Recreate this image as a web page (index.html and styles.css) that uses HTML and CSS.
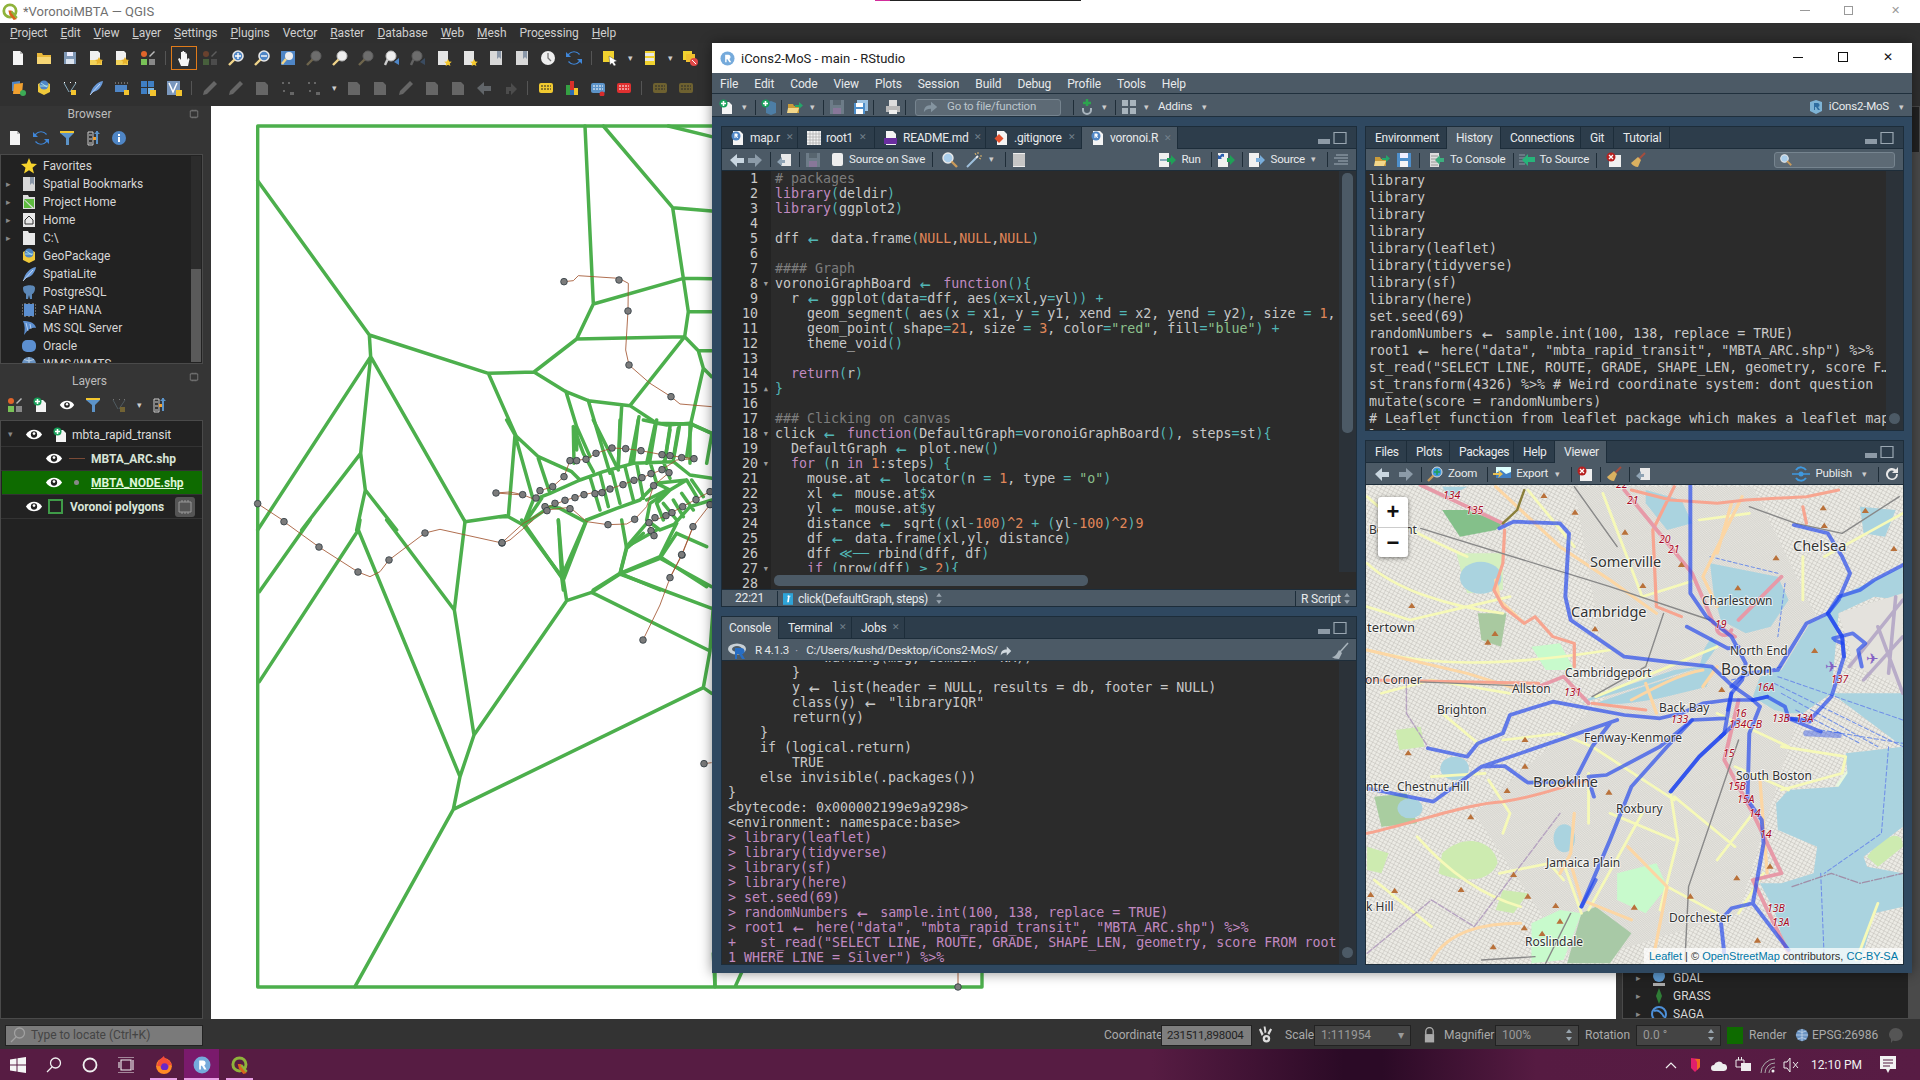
FILE: index.html
```html
<!DOCTYPE html>
<html lang="en">
<head>
<meta charset="utf-8">
<title>VoronoiMBTA — QGIS and RStudio</title>
<link rel="stylesheet" href="styles.css">
</head>
<body>
<svg class="defs" width="0" height="0">
<defs>
<symbol id="doc" viewBox="0 0 16 16"><path d="M3 1h7l3 3v11H3z" fill="#f4f4f4"/><path d="M10 1v3h3z" fill="#bbb"/></symbol>
<symbol id="docplus" viewBox="0 0 16 16"><path d="M3 3h7l3 3v9H3z" fill="#f4f4f4"/><circle cx="4.5" cy="4.5" r="4" fill="#18a05a"/><path d="M4.5 2v5M2 4.5h5" stroke="#fff" stroke-width="1.6"/></symbol>
<symbol id="folder" viewBox="0 0 16 16"><path d="M1 3h5l1 2h8v9H1z" fill="#e9b83a"/><path d="M1 7h14v7H1z" fill="#f6d675"/></symbol>
<symbol id="folderarrow" viewBox="0 0 16 16"><path d="M1 5h5l1 2h5v7H1z" fill="#c99b3a"/><path d="M1 9h11l-2 5H0z" fill="#f3d78a"/><path d="M8 6h4V3l4 3.5-4 3.5V8H8z" fill="#25a56a"/></symbol>
<symbol id="disk" viewBox="0 0 16 16"><path d="M2 2h12v12H2z" fill="#7e97b5"/><path d="M5 2h6v4H5z" fill="#eef"/><path d="M4 9h8v5H4z" fill="#dbe4ef"/></symbol>
<symbol id="diskw" viewBox="0 0 16 16"><path d="M1 1h14v14H1z" fill="#4e8fcb"/><path d="M4 1h8v5H4z" fill="#eef"/><path d="M4 9h8v6H4z" fill="#f5f5f5"/></symbol>
<symbol id="star" viewBox="0 0 16 16"><path d="M8 0l2.2 5.6 5.8.4-4.5 3.7 1.5 5.8L8 12.3 3 15.5l1.5-5.8L0 6l5.8-.4z" fill="#f6d32d"/></symbol>
<symbol id="bm" viewBox="0 0 16 16"><path d="M2 1h12v14H2z" fill="#d8d8d8"/><path d="M9 1h4v8l-2-2-2 2z" fill="#8a97a8"/></symbol>
<symbol id="bmstar" viewBox="0 0 16 16"><path d="M2 1h10v14H2z" fill="#e4e4e4"/><path d="M12 9l1.2 2.4 2.6.3-2 1.8.6 2.5-2.4-1.3-2.4 1.3.6-2.5-2-1.8 2.6-.3z" fill="#f6c92d"/></symbol>
<symbol id="home" viewBox="0 0 16 16"><path d="M2 1h12v14H2z" fill="#e8e8e8"/><path d="M8 4l4 4v4H4V8z" fill="none" stroke="#333"/></symbol>
<symbol id="phome" viewBox="0 0 16 16"><path d="M2 1h5l1 2h6v12H2z" fill="#dcdcdc"/><path d="M3 5l10 9V5zM3 6v8h8" fill="#5dbb3f"/></symbol>
<symbol id="fold" viewBox="0 0 16 16"><path d="M2 1h5l1 2h6v12H2z" fill="#e8e8e8"/></symbol>
<symbol id="gpkg" viewBox="0 0 16 16"><path d="M8 1l6 3v8l-6 3-6-3V4z" fill="#f0c93a"/><circle cx="8" cy="5" r="4.5" fill="#4f86c6"/><path d="M5 3l6 4M4 6h8" stroke="#cfe" stroke-width=".7"/></symbol>
<symbol id="feather" viewBox="0 0 16 16"><path d="M2 15C4 7 9 2 15 1c-1 6-5 10-10 11z" fill="#6a9ad8"/><path d="M2 15L12 4" stroke="#d8e8ff" stroke-width=".8"/></symbol>
<symbol id="pg" viewBox="0 0 16 16"><path d="M2 4c0-3 12-4 12 0 0 4-2 6-3 6v5H9l-1-4-1 4H5v-5C3 9 2 7 2 4z" fill="#5c88b8"/></symbol>
<symbol id="hana" viewBox="0 0 16 16"><path d="M3 2h10v12H3z" fill="#5c8fd0"/><path d="M1 3h1M1 6h1M1 9h1M1 12h1M14 3h1M14 6h1M14 9h1M14 12h1M4 1v1M8 1v1M12 1v1M4 14v1M8 14v1M12 14v1" stroke="#aaa"/></symbol>
<symbol id="mssql" viewBox="0 0 16 16"><path d="M2 1c5 0 12 1 13 7-6-1-8 2-12 7 1-5 1-10-1-14z" fill="#5c8fd0"/><path d="M5 3l2 8M9 4l1 5" stroke="#d8e8ff" stroke-width=".7"/></symbol>
<symbol id="ora" viewBox="0 0 16 16"><rect x="1" y="2" width="14" height="12" rx="5" fill="#5c8fd0"/></symbol>
<symbol id="globe" viewBox="0 0 16 16"><circle cx="8" cy="8" r="7" fill="#6a93c2"/><path d="M1 8h14M8 1v14M3 3.500q5 3 10 0M3 12.500q5-3 10 0" stroke="#cde" fill="none" stroke-width=".8"/></symbol>
<symbol id="refresh" viewBox="0 0 16 16"><path d="M13 5A6 6 0 0 0 3 5l2 2H0V2l2 2a8 8 0 0 1 12 0z" fill="#3f86d8"/><path d="M3 11a6 6 0 0 0 10 0l-2-2h5v5l-2-2a8 8 0 0 1-12 0z" fill="#3f86d8"/></symbol>
<symbol id="filter" viewBox="0 0 16 16"><path d="M1 1h14v2L10 8v7H7V8L1 3z" fill="#5c93c8"/><path d="M1 1h14v2H1z" fill="#f3c72f"/></symbol>
<symbol id="tree" viewBox="0 0 16 16"><path d="M3 2h5v13H3zM4 5h3M4 9h3M4 13h3" fill="none" stroke="#ccc"/><path d="M12 1v13" stroke="#5c93c8" stroke-width="2"/><path d="M9 4l3-3 3 3" fill="#5c93c8"/><path d="M8 7h3v3H8z" fill="#f0a030"/></symbol>
<symbol id="info" viewBox="0 0 16 16"><circle cx="8" cy="8" r="7" fill="#4f86c6"/><path d="M7 7h2v5H7zM7 4h2v2H7z" fill="#fff"/></symbol>
<symbol id="eye" viewBox="0 0 20 14"><path d="M1 7c4-7 14-7 18 0-4 7-14 7-18 0z" fill="#fff"/><circle cx="10" cy="7" r="3.500" fill="#222"/><circle cx="10" cy="6" r="1.500" fill="#fff"/></symbol>
<symbol id="hand" viewBox="0 0 16 16"><path d="M5 16L2 9l1.500-1L5 10V2h1.500v6V1H8v7V2h1.500v6V3.500H11V10l1-2 1.500 1-1.500 7z" fill="#f5f5f5"/></symbol>
<symbol id="lensp" viewBox="0 0 16 16"><circle cx="10" cy="6" r="5" fill="#4f86c6" stroke="#e8e8e8" stroke-width="1.600"/><path d="M10 3v6M7 6h6" stroke="#fff" stroke-width="1.400"/><path d="M6.500 9.500L1 15" stroke="#f1d58a" stroke-width="2.400"/></symbol>
<symbol id="lensm" viewBox="0 0 16 16"><circle cx="10" cy="6" r="5" fill="#4f86c6" stroke="#e8e8e8" stroke-width="1.600"/><path d="M7 6h6" stroke="#fff" stroke-width="1.400"/><path d="M6.500 9.500L1 15" stroke="#f1d58a" stroke-width="2.400"/></symbol>
<symbol id="lensf" viewBox="0 0 16 16"><path d="M1 1h14v14H1z" fill="#4f86c6"/><circle cx="9" cy="6" r="4" fill="#eee"/><path d="M6 9L2 14" stroke="#f1d58a" stroke-width="2.400"/></symbol>
<symbol id="lens" viewBox="0 0 16 16"><circle cx="10" cy="6" r="5" fill="#eee" stroke="#bbb"/><path d="M6.500 9.500L1 15" stroke="#f1d58a" stroke-width="2.400"/></symbol>
<symbol id="lensb" viewBox="0 0 16 16"><circle cx="7" cy="6" r="5" fill="#eee" stroke="#bbb"/><path d="M3.500 9.500L1 15" stroke="#ccc" stroke-width="2.400"/><path d="M15 8l-5 4 5 3z" fill="#4f86c6"/></symbol>
<symbol id="clock" viewBox="0 0 16 16"><circle cx="8" cy="8" r="7" fill="#eee"/><path d="M8 3v5l3 3" stroke="#777" fill="none" stroke-width="1.300"/></symbol>
<symbol id="sel" viewBox="0 0 16 16"><path d="M1 1h11v11H1z" fill="#f1d22f"/><path d="M7 6l8 5-3 1 2 3-2 1-2-3-2 2z" fill="#fff" stroke="#333" stroke-width=".4"/></symbol>
<symbol id="form" viewBox="0 0 16 16"><path d="M3 1h10v14H3z" fill="#f1d22f"/><path d="M3 3h9v3H3zM3 8h9v3H3z" fill="#e8e8e8"/></symbol>
<symbol id="desel" viewBox="0 0 16 16"><path d="M1 1h9v9H1z" fill="#f1d22f"/><path d="M4 4h9v8H4z" fill="#f1c02f"/><circle cx="12" cy="12" r="4" fill="#e04848"/><path d="M10 10l4 4" stroke="#fff"/></symbol>
<symbol id="shape" viewBox="0 0 16 16"><circle cx="4" cy="4" r="3" fill="#e0652a"/><path d="M9 6l5-5 1 1-5 5z" fill="#bbb"/><path d="M1 9h6v6H1z" fill="#79c257"/><path d="M9 9h6v6H9z" fill="#888"/></symbol>
<symbol id="docstar" viewBox="0 0 16 16"><path d="M2 1h8l2 2v7H2z" fill="#f0f0f0"/><path d="M2 10h12v5H2z" fill="#f2d35a"/><path d="M11 7l1.300 2.600 2.700.3-2 1.900.5 2.700L11 13.200 8.500 14.500l.5-2.700-2-1.900 2.700-.3z" fill="#e8b32c"/></symbol>
<symbol id="layeradd" viewBox="0 0 16 16"><path d="M2 2l8-1v10H2z" fill="#4f86c6"/><path d="M4 4l9-1-1 11H3z" fill="#f0a030"/><circle cx="13" cy="13" r="3" fill="#3cab56"/></symbol>
<symbol id="pts" viewBox="0 0 16 16"><path d="M2 2h1v1H2zM8 2h1v1H8zM13 2h1v1h-1z" fill="#fff"/><path d="M2 3l5 9M14 3l-6 9" stroke="#8ab" /><path d="M9 10h5v5H9z" fill="#f3c42f"/></symbol>
<symbol id="rect" viewBox="0 0 16 16"><path d="M1 3h14M1 14" stroke="#aaa" stroke-dasharray="1 2"/><path d="M1 5h12v7H1z" fill="#4f86c6"/><path d="M10 10h5v5h-5z" fill="#f3c42f"/></symbol>
<symbol id="grid" viewBox="0 0 16 16"><path d="M1 1h6v6H1zM8 1h6v6H8zM1 8h6v6H1z" fill="#3f7fc4"/><path d="M8 8h6v6H8z" fill="#7cb6e0"/><path d="M10 10h6v6h-6z" fill="#f3c42f"/></symbol>
<symbol id="vv" viewBox="0 0 16 16"><path d="M1 1h13v14H1z" fill="#7a97bd"/><path d="M3 3l4 9 4-9" stroke="#fff" fill="none" stroke-width="1.500"/><path d="M10 10h6v6h-6z" fill="#f3c42f"/></symbol>
<symbol id="pen" viewBox="0 0 16 16"><path d="M12 1l3 3L5 14l-4 1 1-4z" fill="#666"/></symbol>
<symbol id="gear" viewBox="0 0 16 16"><path d="M2 2h9l3 3v10H2z" fill="#666"/></symbol>
<symbol id="ptsd" viewBox="0 0 16 16"><path d="M2 2h2v2H2zM8 2h2v2H8zM3 10h2v2H3zM10 12h4v3h-4z" fill="#666"/></symbol>
<symbol id="abc" viewBox="0 0 16 16"><rect x="1" y="3" width="14" height="10" rx="2" fill="#f0c930"/><path d="M3 6h10M3 9h10" stroke="#222" stroke-dasharray="2 1"/></symbol>
<symbol id="abcb" viewBox="0 0 16 16"><rect x="1" y="3" width="14" height="10" rx="2" fill="#5c93c8"/><path d="M3 6h10M3 9h10" stroke="#fff" stroke-dasharray="2 1"/><circle cx="12" cy="14" r="2.500" fill="#d62c2c"/></symbol>
<symbol id="abcr" viewBox="0 0 16 16"><rect x="1" y="3" width="14" height="10" rx="2" fill="#df3030"/><path d="M3 6h10M3 9h10" stroke="#fff" stroke-dasharray="2 1"/></symbol>
<symbol id="bars" viewBox="0 0 16 16"><path d="M6 1h4v9H6z" fill="#d8302a"/><path d="M2 5h4v10H2z" fill="#35a043"/><path d="M10 8h4v7h-4z" fill="#f0c72f"/><path d="M6 10h4v5H6z" fill="#2f6db5"/></symbol>
<symbol id="redo" viewBox="0 0 16 16"><path d="M4 14V7h5V3l6 6-6 6v-4H7v3z" fill="#888"/></symbol>
<symbol id="rcube" viewBox="0 0 16 16"><path d="M8 1l6 2v9l-6 3-6-3V3z" fill="#7eb3d5"/><path d="M6 4h3a2 2 0 0 1 1 4l2 3h-2L8 8H7v3H6z" fill="#2f6da0"/></symbol>
<symbol id="rnew" viewBox="0 0 16 16"><path d="M5 4l5-2 5 2v10l-5 2-5-2z" fill="#4d7ea6"/><circle cx="4.500" cy="4.500" r="4" fill="#18a05a"/><path d="M4.500 2v5M2 4.500h5" stroke="#fff" stroke-width="1.600"/></symbol>
<symbol id="rcirc" viewBox="0 0 16 16"><circle cx="8" cy="8" r="7.500" fill="#75aadb"/><path d="M5.500 4h3.500a2.400 2.400 0 0 1 1 4.500l2 3.500h-2L8 8.700H7V12H5.500z" fill="#fff"/></symbol>
<symbol id="rfile" viewBox="0 0 16 16"><path d="M3 1h7l3 3v11H3z" fill="#f4f4f4"/><circle cx="6" cy="6" r="4.500" fill="#4f86c6"/><path d="M4.500 3.500h2a1.400 1.400 0 0 1 .6 2.600l1 2H7L5.800 6.300h-.3V8h-1z" fill="#fff"/></symbol>
<symbol id="table" viewBox="0 0 16 16"><path d="M1 1h14v14H1z" fill="#f2f2f2"/><path d="M1 4h14M1 7h14M1 10h14M1 13h14M4 1v14M7 1v14M10 1v14M13 1v14" stroke="#aaa" stroke-width=".7"/></symbol>
<symbol id="md" viewBox="0 0 16 16"><path d="M3 1h7l3 3v11H3z" fill="#f4f4f4"/><path d="M1 8h13v6H1z" fill="#6a2ea0"/></symbol>
<symbol id="git" viewBox="0 0 16 16"><path d="M3 1h7l3 3v11H3z" fill="#f4f4f4"/><path d="M5 4l4.500 4.500-4.500 4.500L.5 8.500z" fill="#e2512e"/></symbol>
<symbol id="print" viewBox="0 0 16 16"><path d="M4 1h8v6H4z" fill="#ddd"/><path d="M1 7h14v6H1z" fill="#b9b9b9"/><path d="M4 11h8v4H4z" fill="#eee"/></symbol>
<symbol id="diskgray" viewBox="0 0 16 16"><path d="M1 1h14v14H1z" fill="#6d7c88"/><path d="M4 1h8v5H4z" fill="#57656f"/><path d="M4 9h8v6H4z" fill="#879"/></symbol>
<symbol id="disks" viewBox="0 0 16 16"><path d="M4 1h11v11H4z" fill="#9cc2e2"/><path d="M1 4h11v11H1z" fill="#4e8fcb"/><path d="M3 4h7v4H3z" fill="#fff"/><path d="M3 10h7v5H3z" fill="#fff"/></symbol>
<symbol id="back" viewBox="0 0 16 16"><path d="M1 8l7-6v4h7v5H8v4z" fill="#c9d6e0"/></symbol>
<symbol id="fwd" viewBox="0 0 16 16"><path d="M15 8L8 2v4H1v5h7v4z" fill="#8c9ba8"/></symbol>
<symbol id="popout" viewBox="0 0 16 16"><path d="M5 2h10v12H5z" fill="#e8e8e8"/><path d="M1 10l5-5v3h3v3H6v3z" fill="#8fa3b4"/></symbol>
<symbol id="lenss" viewBox="0 0 16 16"><circle cx="6" cy="6" r="5" fill="#a9cdea" stroke="#e8e8e8" stroke-width="1.400"/><path d="M9.500 9.500L15 15" stroke="#c99a5a" stroke-width="2.400"/></symbol>
<symbol id="wand" viewBox="0 0 16 16"><path d="M1 15L10 6" stroke="#9fc0dd" stroke-width="2"/><path d="M10 6l2-2" stroke="#eee" stroke-width="2"/><path d="M12 0v2M16 4h-2M9 1l1 2M15 7l-2-1" stroke="#e0b66a"/></symbol>
<symbol id="notes" viewBox="0 0 16 16"><path d="M2 1h12v14H2z" fill="#eee"/><path d="M2 3h12M2 5h12M2 7h12M2 9h12M2 11h12M2 13h12" stroke="#888" stroke-width=".8"/></symbol>
<symbol id="run" viewBox="0 0 18 16"><path d="M1 1h10v14H1z" fill="#f0f0f0"/><path d="M2 7h7v2H2z" fill="#8ab"/><path d="M9 6h4V3l5 5-5 5v-3H9z" fill="#1fa057"/></symbol>
<symbol id="rerun" viewBox="0 0 18 16"><path d="M1 1h10v14H1z" fill="#f0f0f0"/><path d="M7 2a3 3 0 0 0-4 2L1 3v4h4L4 6a2 2 0 0 1 3-1z" fill="#2b5fb0"/><path d="M10 6h3V3l5 5-5 5v-3h-3z" fill="#1fa057"/></symbol>
<symbol id="source" viewBox="0 0 18 16"><path d="M1 1h10v14H1z" fill="#f0f0f0"/><path d="M8 6h4V3l5 5-5 5v-3H8z" fill="#79aedc"/></symbol>
<symbol id="lines" viewBox="0 0 16 16"><path d="M3 3h12M1 6h14M5 9h10M1 12h14" stroke="#a0adb8"/></symbol>
<symbol id="tocon" viewBox="0 0 16 16"><path d="M1 1h9v14H1z" fill="#ddd"/><path d="M2 4h7M2 7h7M2 10h7M2 13h7" stroke="#888" stroke-width=".8"/><path d="M6 8l5-5v3h4v4h-4v3z" fill="#3cae7e"/></symbol>
<symbol id="tosrc" viewBox="0 0 16 16"><path d="M0 3h6M0 6h6M0 9h6M0 12h6" stroke="#8a98a4"/><path d="M3 8l6-6v3h7v5H9v4z" fill="#27b47a"/></symbol>
<symbol id="xdoc" viewBox="0 0 16 16"><path d="M3 3h12v12H3z" fill="#f0f0f0"/><circle cx="5" cy="5" r="4.500" fill="#b72020"/><path d="M3 3l4 4M7 3l-4 4" stroke="#fff" stroke-width="1.300"/></symbol>
<symbol id="broom" viewBox="0 0 16 16"><path d="M15 1L9 7" stroke="#a54d3e" stroke-width="2"/><path d="M8 5l3 3-3 7c-3 0-6-2-7-4z" fill="#d9b060"/></symbol>
<symbol id="fx" viewBox="0 0 12 14"><path d="M0 0h12v14H0z" fill="#2ea4d8"/><path d="M7 3h2v1H8L7 11H5l1-7H5V3h1l1-1z" fill="#fff"/></symbol>
<symbol id="upd" viewBox="0 0 6 12"><path d="M3 0l3 4H0zM3 12L0 8h6z" fill="#98a4ae"/></symbol>
<symbol id="share" viewBox="0 0 16 16"><path d="M1 14c0-6 3-8 8-8V2l6 6-6 6v-4c-4 0-6 1-8 4z" fill="#d0d8de"/></symbol>
<symbol id="pan" viewBox="0 0 18 16"><path d="M1 14c0-6 3-8 8-8V2l7 6-7 6v-4c-4 0-6 1-8 4z" fill="#8494a0"/></symbol>
<symbol id="vcs" viewBox="0 0 16 16"><path d="M8 0v7M4 4h8" stroke="#2da44e" stroke-width="2.500"/><path d="M4 9v2a4 4 0 0 0 8 0V9" fill="none" stroke="#a8b4bd" stroke-width="2"/></symbol>
<symbol id="panes" viewBox="0 0 16 16"><path d="M1 1h6v6H1zM9 1h6v6H9zM1 9h6v6H1zM9 9h6v6H9z" fill="#a8b4bd"/></symbol>
<symbol id="pub" viewBox="0 0 18 14"><path d="M4 3c3-4 8-3 10 0M14 11c-3 4-8 3-10 0" fill="none" stroke="#3f99df" stroke-width="2"/><path d="M0 7h18" stroke="#3f99df" stroke-width="1.500"/><circle cx="9" cy="7" r="2.500" fill="#3f99df"/></symbol>
<symbol id="reload" viewBox="0 0 16 16"><path d="M14 8a6 6 0 1 1-2-4.500L14 1v6H8l2-2a4 4 0 1 0 2 3z" fill="#e8e8e8"/></symbol>
<symbol id="zoomp" viewBox="0 0 16 16"><circle cx="10" cy="6" r="5" fill="#3f99df" stroke="#ddd"/><path d="M10 3v6M7 6h6" stroke="#1fa057" stroke-width="1.500"/><path d="M6.500 9.500L1 15" stroke="#c99a5a" stroke-width="2.400"/></symbol>
<symbol id="pic" viewBox="0 0 18 16"><path d="M3 1h15v11H3z" fill="#dff"/><path d="M3 7l5-3 5 4 5-2v6H3z" fill="#3f7fc4"/><path d="M0 7h6l-1-3 5 4-5 4 1-3H0z" fill="#e8c050"/></symbol>
<symbol id="mini" viewBox="0 0 30 14"><path d="M1 8h12v5H1z" fill="#8d9aa6"/><path d="M17 1.500h12v11H17z" fill="none" stroke="#9aa7b2" stroke-width="1.200"/></symbol>
<symbol id="brush" viewBox="0 0 18 18"><path d="M17 1L9 10" stroke="#a9b4bc" stroke-width="1.500"/><path d="M8 8l3 3-3 6c-3 0-6-1-7-2 3 0 5-3 7-7z" fill="#a9b4bc"/></symbol>
<symbol id="rlogo" viewBox="0 0 20 16"><ellipse cx="9" cy="6" rx="9" ry="5.500" fill="#c8d0d6"/><ellipse cx="9" cy="6" rx="5" ry="3" fill="#4e5c68"/><path d="M7 5h6a3 3 0 0 1 1 6l3 5h-3l-3-5H9v5H7z" fill="#276dc3"/></symbol>
<symbol id="qlogo" viewBox="0 0 16 16"><circle cx="7.500" cy="7.500" r="5.800" fill="none" stroke="#8fb33b" stroke-width="2.600"/><path d="M6 7l3 0 1 3 4 5-3 1-4-5z" fill="#d8641d"/><path d="M9 8l5 6" stroke="#8fb33b" stroke-width="2"/></symbol>
<symbol id="lock" viewBox="0 0 14 16"><path d="M3 7V4a4 4 0 0 1 8 0v3" fill="none" stroke="#aaa" stroke-width="1.500"/><path d="M2 7h10v9H2z" fill="#aaa"/></symbol>
<symbol id="wkt" viewBox="0 0 16 18"><path d="M4 10L1 3l2-1 3 6M7 7L6 0h2l1 6M10 7l3-5 2 1-3 6" fill="#ddd"/><circle cx="9" cy="13" r="4" fill="#ddd"/><circle cx="9" cy="13" r="1.500" fill="#333"/></symbol>
<symbol id="chip" viewBox="0 0 16 16"><path d="M2 3h12v10H2z" fill="none" stroke="#999"/><path d="M5 1v2M8 1v2M11 1v2M5 13v2M8 13v2M11 13v2" stroke="#999"/></symbol>
<symbol id="gdal" viewBox="0 0 16 16"><circle cx="8" cy="6" r="6" fill="#5c99cf"/><path d="M2 13h12v3H2z" fill="#aaa"/></symbol>
<symbol id="grass" viewBox="0 0 16 16"><path d="M8 0l3 8-3 8-3-8z" fill="#2f7c36"/></symbol>
<symbol id="saga" viewBox="0 0 16 16"><circle cx="8" cy="8" r="7" fill="none" stroke="#4d8fd8" stroke-width="2"/><path d="M3 5c4-2 8 2 10 6" fill="none" stroke="#4d8fd8" stroke-width="2"/></symbol>
<symbol id="bubble" viewBox="0 0 16 16"><path d="M8 1a7 6.500 0 1 1-3 12.500L3 16v-4A7 6.500 0 0 1 8 1z" fill="#555"/></symbol>
<symbol id="win" viewBox="0 0 16 16"><path d="M0 2.500l6.500-1v6H0zM7.500 1.300L16 0v7.500H7.500zM0 8.500h6.500v6L0 13.500zM7.500 8.500H16V16l-8.500-1.200z" fill="#f5f5f5"/></symbol>
<symbol id="srch" viewBox="0 0 16 16"><circle cx="9.500" cy="6" r="5" fill="none" stroke="#f0f0f0" stroke-width="1.300"/><path d="M6 10l-5 5" stroke="#f0f0f0" stroke-width="1.300"/></symbol>
<symbol id="ring" viewBox="0 0 16 16"><circle cx="8" cy="8" r="6.500" fill="none" stroke="#f0f0f0" stroke-width="1.800"/></symbol>
<symbol id="taskv" viewBox="0 0 16 16"><path d="M3 3h10v10H3zM0 0h16M0 16h16M15 3v10M1 5v6" fill="none" stroke="#f0f0f0" stroke-width="1.100"/></symbol>
<symbol id="ff" viewBox="0 0 16 16"><circle cx="8" cy="9" r="7" fill="#ff8a24"/><circle cx="8.500" cy="9" r="3.500" fill="#7a2bd0"/><path d="M2 9C2 4 6 2 8 0c0 3 6 3 7 8z" fill="#f44c3a"/><circle cx="8.500" cy="9.500" r="3" fill="#6a28c8"/></symbol>
<symbol id="chev" viewBox="0 0 16 16"><path d="M3 11l5-5 5 5" fill="none" stroke="#f0f0f0" stroke-width="1.200"/></symbol>
<symbol id="proton" viewBox="0 0 16 16"><path d="M4 1l9 1v8l-5 5-4-4z" fill="#e0206c"/><path d="M8 2l5 0v8l-3 3V5z" fill="#f06a20"/></symbol>
<symbol id="cloud" viewBox="0 0 16 12"><path d="M3 12a3 3 0 0 1 0-6 5 5 0 0 1 9-1 3.500 3.500 0 0 1 1 7z" fill="#eee"/></symbol>
<symbol id="plug" viewBox="0 0 16 16"><path d="M1 3h8v7H1z" fill="none" stroke="#eee"/><path d="M3 0h1v3H3zM6 0h1v3H6z" fill="#eee"/><path d="M6 6h10v8H6z" fill="#eee"/></symbol>
<symbol id="wifi" viewBox="0 0 16 16"><path d="M2 16a14 14 0 0 1 14-14M6 16a10 10 0 0 1 10-10M10 16a6 6 0 0 1 6-6" fill="none" stroke="#aaa"/><circle cx="14" cy="14" r="1.500" fill="#eee"/></symbol>
<symbol id="spk" viewBox="0 0 16 16"><path d="M1 5h3l3-4v14l-3-4H1z" fill="none" stroke="#eee"/><path d="M10 5l5 6M15 5l-5 6" stroke="#eee"/></symbol>
<symbol id="notif" viewBox="0 0 16 18"><path d="M0 0h16v13h-6l-2 4-2-4H0z" fill="#f2f2f2"/><path d="M3 4h10M3 7h10M3 10h7" stroke="#541a40"/></symbol>
</defs>
</svg>

<div class="screen">
  <div class="capline"><i class="capline-p"></i></div>

  <section class="qgis">
    <header class="q-title">
      <svg class="ic17"><use href="#qlogo"/></svg>
      <span class="q-title-t">*VoronoiMBTA — QGIS</span>
      <span class="winbtns"><i class="w-min"></i><i class="w-max"></i><i class="w-close">✕</i></span>
    </header>
    <nav class="q-menu">
      <span><u>P</u>roject</span><span><u>E</u>dit</span><span><u>V</u>iew</span><span><u>L</u>ayer</span><span><u>S</u>ettings</span><span><u>P</u>lugins</span><span>Vect<u>o</u>r</span><span><u>R</u>aster</span><span><u>D</u>atabase</span><span><u>W</u>eb</span><span><u>M</u>esh</span><span>Pro<u>c</u>essing</span><span><u>H</u>elp</span>
    </nav>
    <div class="q-tb">
      <b class="q-sep0"></b>
      <i class="b"><svg class="ic"><use href="#doc"/></svg></i>
      <i class="b"><svg class="ic"><use href="#folder"/></svg></i>
      <i class="b"><svg class="ic"><use href="#disk"/></svg></i>
      <i class="b"><svg class="ic"><use href="#docstar"/></svg></i>
      <i class="b"><svg class="ic"><use href="#docstar"/></svg></i>
      <i class="b"><svg class="ic"><use href="#shape"/></svg></i>
      <b class="q-sep"></b>
      <i class="b b-on"><svg class="ic"><use href="#hand"/></svg></i>
      <i class="b"><svg class="ic dim"><use href="#shape"/></svg></i>
      <i class="b"><svg class="ic"><use href="#lensp"/></svg></i>
      <i class="b"><svg class="ic"><use href="#lensm"/></svg></i>
      <i class="b"><svg class="ic"><use href="#lensf"/></svg></i>
      <i class="b"><svg class="ic dim"><use href="#lens"/></svg></i>
      <i class="b"><svg class="ic"><use href="#lens"/></svg></i>
      <i class="b"><svg class="ic dim"><use href="#lens"/></svg></i>
      <i class="b"><svg class="ic"><use href="#lensb"/></svg></i>
      <i class="b"><svg class="ic dim"><use href="#lensb"/></svg></i>
      <i class="b"><svg class="ic"><use href="#bmstar"/></svg></i>
      <i class="b"><svg class="ic"><use href="#bmstar"/></svg></i>
      <i class="b"><svg class="ic"><use href="#bm"/></svg></i>
      <i class="b"><svg class="ic"><use href="#bm"/></svg></i>
      <i class="b"><svg class="ic"><use href="#clock"/></svg></i>
      <i class="b"><svg class="ic"><use href="#refresh"/></svg></i>
      <b class="q-sep"></b>
      <i class="b"><svg class="ic"><use href="#sel"/></svg></i>
      <i class="car">▾</i>
      <i class="b"><svg class="ic"><use href="#form"/></svg></i>
      <i class="car">▾</i>
      <i class="b"><svg class="ic"><use href="#desel"/></svg></i>
    </div>
    <div class="q-tb q-tb2">
      <b class="q-sep0"></b>
      <i class="b"><svg class="ic"><use href="#layeradd"/></svg></i>
      <i class="b"><svg class="ic"><use href="#gpkg"/></svg></i>
      <i class="b"><svg class="ic"><use href="#pts"/></svg></i>
      <i class="b"><svg class="ic"><use href="#feather"/></svg></i>
      <i class="b"><svg class="ic"><use href="#rect"/></svg></i>
      <i class="b"><svg class="ic"><use href="#grid"/></svg></i>
      <i class="b"><svg class="ic"><use href="#vv"/></svg></i>
      <b class="q-sep"></b>
      <i class="b"><svg class="ic"><use href="#pen"/></svg></i>
      <i class="b"><svg class="ic"><use href="#pen"/></svg></i>
      <i class="b"><svg class="ic"><use href="#gear"/></svg></i>
      <i class="b"><svg class="ic"><use href="#ptsd"/></svg></i>
      <i class="b"><svg class="ic"><use href="#ptsd"/></svg></i>
      <i class="car">▾</i>
      <i class="b"><svg class="ic"><use href="#gear"/></svg></i>
      <i class="b"><svg class="ic"><use href="#gear"/></svg></i>
      <i class="b"><svg class="ic"><use href="#pen"/></svg></i>
      <i class="b"><svg class="ic"><use href="#gear"/></svg></i>
      <i class="b"><svg class="ic"><use href="#gear"/></svg></i>
      <i class="b"><svg class="ic dim"><use href="#back"/></svg></i>
      <i class="b"><svg class="ic dim"><use href="#redo"/></svg></i>
      <b class="q-sep"></b>
      <i class="b"><svg class="ic"><use href="#abc"/></svg></i>
      <i class="b"><svg class="ic"><use href="#bars"/></svg></i>
      <i class="b"><svg class="ic"><use href="#abcb"/></svg></i>
      <i class="b"><svg class="ic"><use href="#abcr"/></svg></i>
      <b class="q-sep"></b>
      <i class="b"><svg class="ic dim"><use href="#abc"/></svg></i>
      <i class="b"><svg class="ic dim"><use href="#abc"/></svg></i>
    </div>

    <div class="q-main">
      <aside class="q-side">
        <div class="p-title">Browser<svg class="p-close"><use href="#chip"/></svg></div>
        <div class="p-tools">
          <i class="b"><svg class="ic"><use href="#doc"/></svg></i>
          <i class="b"><svg class="ic"><use href="#refresh"/></svg></i>
          <i class="b"><svg class="ic"><use href="#filter"/></svg></i>
          <i class="b"><svg class="ic"><use href="#tree"/></svg></i>
          <i class="b"><svg class="ic"><use href="#info"/></svg></i>
        </div>
        <div class="tree tree-b">
          <div class="row"><i class="tw"></i><svg class="ic"><use href="#star"/></svg><span>Favorites</span></div>
          <div class="row"><i class="tw">▸</i><svg class="ic"><use href="#bm"/></svg><span>Spatial Bookmarks</span></div>
          <div class="row"><i class="tw">▸</i><svg class="ic"><use href="#phome"/></svg><span>Project Home</span></div>
          <div class="row"><i class="tw">▸</i><svg class="ic"><use href="#home"/></svg><span>Home</span></div>
          <div class="row"><i class="tw">▸</i><svg class="ic"><use href="#fold"/></svg><span>C:\</span></div>
          <div class="row"><i class="tw"></i><svg class="ic"><use href="#gpkg"/></svg><span>GeoPackage</span></div>
          <div class="row"><i class="tw"></i><svg class="ic"><use href="#feather"/></svg><span>SpatiaLite</span></div>
          <div class="row"><i class="tw"></i><svg class="ic"><use href="#pg"/></svg><span>PostgreSQL</span></div>
          <div class="row"><i class="tw"></i><svg class="ic"><use href="#hana"/></svg><span>SAP HANA</span></div>
          <div class="row"><i class="tw"></i><svg class="ic"><use href="#mssql"/></svg><span>MS SQL Server</span></div>
          <div class="row"><i class="tw"></i><svg class="ic"><use href="#ora"/></svg><span>Oracle</span></div>
          <div class="row"><i class="tw"></i><svg class="ic"><use href="#globe"/></svg><span>WMS/WMTS</span></div>
          <i class="vs"><i class="vs-th"></i></i>
        </div>
        <div class="p-title p-title2">Layers<svg class="p-close"><use href="#chip"/></svg></div>
        <div class="p-tools p-tools2">
          <i class="b"><svg class="ic"><use href="#shape"/></svg></i>
          <i class="b"><svg class="ic"><use href="#docplus"/></svg></i>
          <i class="b"><svg class="ic"><use href="#eye"/></svg></i>
          <i class="b"><svg class="ic"><use href="#filter"/></svg></i>
          <i class="b"><svg class="ic dim"><use href="#pts"/></svg></i>
          <i class="car">▾</i>
          <i class="b"><svg class="ic"><use href="#tree"/></svg></i>
        </div>
        <div class="tree tree-l">
          <div class="lrow lrow-1"><i class="tw">▾</i><svg class="eye"><use href="#eye"/></svg><svg class="ic"><use href="#docplus"/></svg><span>mbta_rapid_transit</span></div>
          <div class="lrow lrow-2"><svg class="eye"><use href="#eye"/></svg><i class="lg-line"></i><strong>MBTA_ARC.shp</strong></div>
          <div class="lrow lrow-2 lrow-on"><svg class="eye"><use href="#eye"/></svg><i class="lg-dot"></i><strong>MBTA_NODE.shp</strong></div>
          <div class="lrow lrow-3"><svg class="eye"><use href="#eye"/></svg><i class="lg-box"></i><strong>Voronoi polygons</strong><i class="lg-chip"><svg class="ic"><use href="#chip"/></svg></i></div>
        </div>
      </aside>

      <div class="q-canvas">
        <svg class="voronoi" viewBox="211 106 1405 913" xmlns="http://www.w3.org/2000/svg">
          <g class="vl">
            <path d="M257.700 126H982V987H257.700zM715 965V987M735 987L745 965"/>
            <g transform="translate(210 110) scale(.33333)">
              <path d="M143 212L478 675L482 740M478 675L835 790L972 786L1100 687L1150 582L1125 48M1150 582L1420 505L1388 293L1180 48M1388 293L1505 303M1420 505L1505 506M1420 505L1435 605L1505 605M1435 605L1424 680L1100 687M1424 680L1465 722L1505 722M1465 722L1480 775L1505 800M1424 680L1260 887M1480 775L1442 942M972 786L1068 845L1135 872L1260 887L1340 940L1442 942L1505 970M1375 48L1505 80M835 790L917 975M482 740L143 1260M482 740L452 1030L466 1140L440 1260M452 1030L275 1260M466 1140L560 1260M482 740L765 1235L888 1217M1068 845L1100 950L1140 1040M1100 950V1020M1135 872L1200 1090M1235 890L1225 1060M1287 920L1260 1060M1335 945L1310 1060M1380 950L1365 1050M1408 950L1390 1050M1440 945V1060M1505 975L1490 1060"/>
            </g>
            <g transform="translate(210 520) scale(.33333)">
              <path d="M765 5L733 270L530 0M733 270L792 645L1070 242M445 30L750 770M445 30L148 485M445 30L450 0M300 0L148 215M792 645L750 770L730 868L1480 503M730 868L435 1400M1070 242L1060 180L935 0M1060 180L1130 0M1060 180L1045 0M1070 242L1145 217L1230 162L1350 115M1230 162L1505 265M1145 217L1500 393L1480 503M1350 115L1505 200M1480 503L1505 520M1500 393L1510 260M1350 115L1400 40M1230 162L1250 85L1235 0M1250 85L1300 40M1510 1300L1515 1400"/>
            </g>
            <g transform="translate(500 420) scale(.33333)">
              <path d="M20 0L45 45L25 290M45 45L115 110L215 155L240 180M45 45L100 240L70 315M0 290L25 290L70 315M115 115L150 220M70 315L115 250M70 315L125 235M70 315L185 470L190 510M185 470L175 300M185 470L255 310M70 315L150 260L180 265L255 305M220 20L222 130M220 20L250 100L280 155M280 0L355 150M360 0L355 140M415 0L400 130M470 0L450 120M510 30L495 120M535 25L520 115M575 10L560 110M240 180L310 155L400 130L520 125L570 165L636 175M150 220L240 180M260 300L350 265L420 240L470 190L560 180M270 170L300 270M300 160L325 260M335 150L360 250M375 140L400 240M410 130L430 235M450 125L470 190M490 125L510 175M470 190L510 210L560 180M510 210L450 250L440 300M440 240L500 210M380 380L440 310M380 380L360 460M380 380L470 330M530 310L480 410M360 460L480 410M360 460L280 510M360 460L480 510M480 410L620 500M530 340L620 380M525 310L570 260L636 240M470 250L490 300M490 250L530 300M520 240L550 290M545 220L580 270M575 180L610 230M510 210L470 250M430 0L500 15L570 10L636 40M560 180L590 230M440 300L480 330L530 310M100 240L150 220"/>
            </g>
          </g>
          <g class="vt">
            <g transform="translate(210 110) scale(.33333)">
              <path d="M1062 515L1090 512L1105 497L1227 505L1255 520L1254 603L1247 720L1257 765L1320 820L1383 860L1410 882L1505 890M858 1149L938 1155M143 1181L222 1233"/>
            </g>
            <g transform="translate(210 520) scale(.33333)">
              <path d="M222 5L327 81L444 156L480 170L510 155L537 120L645 39L690 28L876 69L900 60L970 0M1449 21L1416 105L1380 174L1350 255L1299 360M1482 731L1505 728"/>
            </g>
            <g transform="translate(500 420) scale(.33333)">
              <path d="M0 218L30 216L68 224L108 240M108 234L120 212L158 200L192 170L210 122L258 118L288 100L336 84L377 86L423 92L486 104L582 116M135 265L195 241L252 224L330 207L426 173L486 149L530 120L582 116M6 368L70 310L140 270L210 262L260 305L324 314L380 312L404 298L440 260L461 197L507 158M453 332L447 308L498 287L630 215M510 473L545 404L579 320L630 254"/>
            </g>
            <path d="M958 940L958 987"/>
          </g>
          <g class="vn">
            <g transform="translate(210 110) scale(.33333)">
              <circle cx="1062" cy="515" r="10"/><circle cx="1227" cy="510" r="10"/><circle cx="1254" cy="603" r="10"/><circle cx="1257" cy="765" r="10"/><circle cx="1383" cy="860" r="10"/><circle cx="858" cy="1149" r="10"/><circle cx="143" cy="1181" r="10"/>
            </g>
            <g transform="translate(210 520) scale(.33333)">
              <circle cx="222" cy="5" r="10"/><circle cx="327" cy="81" r="10"/><circle cx="444" cy="156" r="10"/><circle cx="537" cy="120" r="10"/><circle cx="645" cy="39" r="10"/><circle cx="876" cy="69" r="10"/><circle cx="1416" cy="105" r="10"/><circle cx="1299" cy="360" r="10"/><circle cx="1482" cy="731" r="10"/>
            </g>
            <g transform="translate(500 420) scale(.33333)">
              <circle cx="6" cy="368" r="10"/><circle cx="68" cy="224" r="10"/><circle cx="108" cy="234" r="10"/><circle cx="120" cy="212" r="10"/><circle cx="158" cy="200" r="10"/><circle cx="192" cy="170" r="10"/><circle cx="210" cy="122" r="10"/><circle cx="230" cy="122" r="10"/><circle cx="258" cy="118" r="10"/><circle cx="288" cy="100" r="10"/><circle cx="336" cy="84" r="10"/><circle cx="377" cy="86" r="10"/><circle cx="423" cy="92" r="10"/><circle cx="486" cy="104" r="10"/><circle cx="510" cy="107" r="10"/><circle cx="545" cy="113" r="10"/><circle cx="582" cy="116" r="10"/><circle cx="507" cy="158" r="10"/><circle cx="486" cy="149" r="10"/><circle cx="453" cy="161" r="10"/><circle cx="426" cy="173" r="10"/><circle cx="402" cy="181" r="10"/><circle cx="369" cy="194" r="10"/><circle cx="330" cy="207" r="10"/><circle cx="306" cy="218" r="10"/><circle cx="285" cy="221" r="10"/><circle cx="252" cy="224" r="10"/><circle cx="225" cy="233" r="10"/><circle cx="195" cy="241" r="10"/><circle cx="165" cy="250" r="10"/><circle cx="135" cy="260" r="10"/><circle cx="141" cy="272" r="10"/><circle cx="210" cy="266" r="10"/><circle cx="324" cy="314" r="10"/><circle cx="404" cy="298" r="10"/><circle cx="461" cy="197" r="10"/><circle cx="447" cy="308" r="10"/><circle cx="465" cy="293" r="10"/><circle cx="498" cy="287" r="10"/><circle cx="516" cy="278" r="10"/><circle cx="548" cy="260" r="10"/><circle cx="588" cy="239" r="10"/><circle cx="630" cy="215" r="10"/><circle cx="630" cy="254" r="10"/><circle cx="579" cy="320" r="10"/><circle cx="545" cy="404" r="10"/><circle cx="510" cy="473" r="10"/><circle cx="453" cy="332" r="10"/><circle cx="462" cy="347" r="10"/>
            </g>
            <circle cx="958" cy="987" r="3.300"/>
          </g>
        </svg>
      </div>

      <aside class="q-right">
        <i class="qr-th"></i>
        <div class="qr-row"><i class="tw">▸</i><svg class="ic"><use href="#gdal"/></svg><span>GDAL</span></div>
        <div class="qr-row"><i class="tw">▸</i><svg class="ic"><use href="#grass"/></svg><span>GRASS</span></div>
        <div class="qr-row qr-last"><i class="tw">▸</i><svg class="ic"><use href="#saga"/></svg><span>SAGA</span></div>
      </aside>
    </div>

    <footer class="q-status">
      <div class="locator"><svg class="ic dim"><use href="#srch"/></svg><span>Type to locate (Ctrl+K)</span></div>
      <span class="s-lab s-coord">Coordinate</span>
      <span class="s-in s-in-coord">231511,898004</span>
      <svg class="s-wkt"><use href="#wkt"/></svg>
      <span class="s-lab s-scale">Scale</span>
      <span class="s-combo s-combo-scale">1:111954<i>▾</i></span>
      <svg class="s-lock"><use href="#lock"/></svg>
      <span class="s-lab s-mag">Magnifier</span>
      <span class="s-combo s-combo-mag">100%<svg class="s-upd"><use href="#upd"/></svg></span>
      <span class="s-lab s-rot">Rotation</span>
      <span class="s-combo s-combo-rot">0.0 °<svg class="s-upd"><use href="#upd"/></svg></span>
      <i class="s-render"></i>
      <span class="s-lab s-rend">Render</span>
      <svg class="s-globe"><use href="#globe"/></svg>
      <span class="s-lab s-epsg">EPSG:26986</span>
      <svg class="s-bub"><use href="#bubble"/></svg>
    </footer>
  </section>

  <footer class="taskbar">
    <i class="tk tk-win"><svg class="ic"><use href="#win"/></svg></i>
    <i class="tk"><svg class="ic"><use href="#srch"/></svg></i>
    <i class="tk"><svg class="ic"><use href="#ring"/></svg></i>
    <i class="tk"><svg class="ic"><use href="#taskv"/></svg></i>
    <i class="tk tk-app tk-ff"><svg class="ic18"><use href="#ff"/></svg></i>
    <i class="tk tk-app tk-r"><svg class="ic18"><use href="#rcirc"/></svg></i>
    <i class="tk tk-app tk-q"><svg class="ic18"><use href="#qlogo"/></svg></i>
    <div class="tray">
      <svg class="ic"><use href="#chev"/></svg>
      <svg class="ic"><use href="#proton"/></svg>
      <svg class="ic"><use href="#cloud"/></svg>
      <svg class="ic"><use href="#plug"/></svg>
      <svg class="ic"><use href="#wifi"/></svg>
      <svg class="ic"><use href="#spk"/></svg>
      <span class="clock">12:10 PM</span>
      <svg class="tray-n"><use href="#notif"/></svg>
    </div>
  </footer>

  <section class="rs">
    <header class="rs-title">
      <svg class="ic15"><use href="#rcirc"/></svg>
      <span>iCons2-MoS - main - RStudio</span>
      <span class="rs-win"><i class="r-min"></i><i class="r-max"></i><i class="r-close">✕</i></span>
    </header>
    <nav class="rs-menu"><span>File</span><span>Edit</span><span>Code</span><span>View</span><span>Plots</span><span>Session</span><span>Build</span><span>Debug</span><span>Profile</span><span>Tools</span><span>Help</span></nav>
    <div class="rs-tb">
      <svg class="ic"><use href="#docplus"/></svg><i class="car">▾</i><b class="sp"></b>
      <svg class="ic"><use href="#rnew"/></svg><b class="sp"></b>
      <svg class="ic"><use href="#folderarrow"/></svg><i class="car">▾</i><b class="sp"></b>
      <svg class="ic"><use href="#diskgray"/></svg>
      <svg class="ic mg6"><use href="#disks"/></svg><b class="sp"></b>
      <svg class="ic mg6"><use href="#print"/></svg><b class="sp"></b>
      <div class="goto"><svg class="ic"><use href="#pan"/></svg><span>Go to file/function</span></div>
      <b class="sp sp-g"></b>
      <svg class="ic"><use href="#vcs"/></svg><i class="car">▾</i><b class="sp"></b>
      <svg class="ic"><use href="#panes"/></svg><i class="car">▾</i>
      <span class="tb-t">Addins</span><i class="car">▾</i>
      <span class="push"></span>
      <svg class="ic"><use href="#rcube"/></svg><span class="tb-t">iCons2-MoS</span><i class="car">▾</i>
    </div>

    <div class="rs-body">
      <div class="col col-l">
        <section class="pane pane-src">
          <div class="tabs">
            <div class="tab t-map"><svg class="ic"><use href="#rfile"/></svg>map.r<i class="x">✕</i></div>
            <div class="tab t-root"><svg class="ic"><use href="#table"/></svg>root1<i class="x">✕</i></div>
            <div class="tab t-readme"><svg class="ic"><use href="#md"/></svg>README.md<i class="x">✕</i></div>
            <div class="tab t-git"><svg class="ic"><use href="#git"/></svg>.gitignore<i class="x">✕</i></div>
            <div class="tab tab-on t-vor"><svg class="ic"><use href="#rfile"/></svg>voronoi.R<i class="x">✕</i></div>
            <svg class="mini"><use href="#mini"/></svg>
          </div>
          <div class="tools">
            <svg class="ic"><use href="#back"/></svg><svg class="ic"><use href="#fwd"/></svg><b class="sp"></b>
            <svg class="ic"><use href="#popout"/></svg><b class="sp"></b>
            <svg class="ic"><use href="#diskgray"/></svg>
            <i class="chk"></i><span class="tb-t tb-nm">Source on Save</span><b class="sp"></b>
            <svg class="ic mg4"><use href="#lenss"/></svg><svg class="ic mg6"><use href="#wand"/></svg><i class="car">▾</i><b class="sp"></b>
            <svg class="ic"><use href="#notes"/></svg>
            <span class="push"></span>
            <svg class="ic18"><use href="#run"/></svg><span class="tb-t">Run</span><b class="sp"></b>
            <svg class="ic18"><use href="#rerun"/></svg><b class="sp"></b>
            <svg class="ic18"><use href="#source"/></svg><span class="tb-t">Source</span><i class="car car-r">▾</i><b class="sp"></b>
            <svg class="ic"><use href="#lines"/></svg>
          </div>
          <div class="editor">
            <div class="gutter">
              <div>1</div><div>2</div><div>3</div><div>4</div><div>5</div><div>6</div><div>7</div><div class="fd">8</div><div>9</div><div>10</div><div>11</div><div>12</div><div>13</div><div>14</div><div class="fu">15</div><div>16</div><div>17</div><div class="fd">18</div><div>19</div><div class="fd">20</div><div>21</div><div>22</div><div>23</div><div>24</div><div>25</div><div>26</div><div class="fd">27</div><div>28</div>
            </div>
<pre class="code"><span class="c"># packages</span>
<span class="k">library</span><span class="p">(</span>deldir<span class="p">)</span>
<span class="k">library</span><span class="p">(</span>ggplot2<span class="p">)</span>

dff <span class="a">←</span> data.frame<span class="p">(</span><span class="o">NULL</span>,<span class="o">NULL</span>,<span class="o">NULL</span><span class="p">)</span>

<span class="c">#### Graph</span>
voronoiGraphBoard <span class="a">←</span> <span class="k">function</span><span class="p">(){</span>
  r <span class="a">←</span> ggplot<span class="p">(</span>data<span class="p">=</span>dff, aes<span class="p">(</span>x<span class="p">=</span>xl,y<span class="p">=</span>yl<span class="p">))</span> <span class="p">+</span>
    geom_segment<span class="p">(</span> aes<span class="p">(</span>x <span class="p">=</span> x1, y <span class="p">=</span> y1, xend <span class="p">=</span> x2, yend <span class="p">=</span> y2<span class="p">)</span>, size <span class="p">=</span> <span class="o">1</span>,
    geom_point<span class="p">(</span> shape<span class="p">=</span><span class="o">21</span>, size <span class="p">=</span> <span class="o">3</span>, color<span class="p">=</span><span class="s">"red"</span>, fill<span class="p">=</span><span class="s">"blue"</span><span class="p">)</span> <span class="p">+</span>
    theme_void<span class="p">()</span>

  <span class="k">return</span><span class="p">(</span>r<span class="p">)</span>
<span class="p">}</span>

<span class="c">### Clicking on canvas</span>
click <span class="a">←</span> <span class="k">function</span><span class="p">(</span>DefaultGraph<span class="p">=</span>voronoiGraphBoard<span class="p">()</span>, steps<span class="p">=</span>st<span class="p">){</span>
  DefaultGraph <span class="a">←</span> plot.new<span class="p">()</span>
  <span class="k">for</span> <span class="p">(</span>n <span class="k">in</span> <span class="o">1</span>:steps<span class="p">)</span> <span class="p">{</span>
    mouse.at <span class="a">←</span> locator<span class="p">(</span>n <span class="p">=</span> <span class="o">1</span>, type <span class="p">=</span> <span class="s">"o"</span><span class="p">)</span>
    xl <span class="a">←</span> mouse.at<span class="p">$</span>x
    yl <span class="a">←</span> mouse.at<span class="p">$</span>y
    distance <span class="a">←</span> sqrt<span class="p">((</span>xl<span class="p">-</span><span class="o">100</span><span class="p">)</span><span class="o">^2</span> <span class="p">+</span> <span class="p">(</span>yl<span class="p">-</span><span class="o">100</span><span class="p">)</span><span class="o">^2</span><span class="p">)</span><span class="o">9</span>
    df <span class="a">←</span> data.frame<span class="p">(</span>xl,yl, distance<span class="p">)</span>
    dff <span class="p">≪──</span> rbind<span class="p">(</span>dff, df<span class="p">)</span>
    <span class="k">if</span> <span class="p">(</span>nrow<span class="p">(</span>dff<span class="p">)</span> <span class="p">≥</span> <span class="o">2</span><span class="p">){</span></pre>
            <i class="vbar"><i class="vbar-th"></i></i>
            <i class="hbar"><i class="hbar-th"></i></i>
          </div>
          <div class="ed-status">
            <span class="es-pos">22:21</span>
            <span class="es-fn"><svg class="fx"><use href="#fx"/></svg>click(DefaultGraph, steps)<svg class="upd"><use href="#upd"/></svg></span>
            <span class="es-type">R Script<svg class="upd"><use href="#upd"/></svg></span>
          </div>
        </section>
        <section class="pane pane-con">
          <div class="tabs">
            <div class="tab tab-on t-con">Console</div>
            <div class="tab t-term">Terminal<i class="x">✕</i></div>
            <div class="tab t-jobs">Jobs<i class="x">✕</i></div>
            <svg class="mini"><use href="#mini"/></svg>
          </div>
          <div class="tools tools-con">
            <svg class="ic20"><use href="#rlogo"/></svg>
            <span class="tb-t con-v">R 4.1.3</span>
            <span class="con-d">·</span>
            <span class="tb-t tb-nm">C:/Users/kushd/Desktop/iCons2-MoS/</span>
            <svg class="ic12"><use href="#share"/></svg>
            <span class="push"></span>
            <svg class="ic18"><use href="#brush"/></svg>
          </div>
          <div class="console">
<pre class="con-out">            warning(msg, domain = NA))
        }
        y <span class="a">←</span> list(header = NULL, results = db, footer = NULL)
        class(y) <span class="a">←</span> "libraryIQR"
        return(y)
    }
    if (logical.return)
        TRUE
    else invisible(.packages())
}
&lt;bytecode: 0x000002199e9a9298&gt;
&lt;environment: namespace:base&gt;
<span class="cmd">&gt; library(leaflet)
&gt; library(tidyverse)
&gt; library(sf)
&gt; library(here)
&gt; set.seed(69)
&gt; randomNumbers <span class="a">←</span> sample.int(100, 138, replace = TRUE)
&gt; root1 <span class="a">←</span> here("data", "mbta_rapid_transit", "MBTA_ARC.shp") %&gt;%
+   st_read("SELECT LINE, ROUTE, GRADE, SHAPE_LEN, geometry, score FROM root
1 WHERE LINE = Silver") %&gt;%</span></pre>
            <i class="con-bar"><i class="dot"></i></i>
          </div>
        </section>
      </div>

      <div class="col col-r">
        <section class="pane pane-hist">
          <div class="tabs">
            <div class="tab t-env">Environment</div>
            <div class="tab tab-on t-his">History</div>
            <div class="tab t-cnn">Connections</div>
            <div class="tab t-gt">Git</div>
            <div class="tab t-tut">Tutorial</div>
            <svg class="mini"><use href="#mini"/></svg>
          </div>
          <div class="tools tools-r">
            <svg class="ic"><use href="#folderarrow"/></svg><svg class="ic mg4"><use href="#diskw"/></svg><b class="sp"></b>
            <svg class="ic mg4"><use href="#tocon"/></svg><span class="tb-t tb-nm">To Console</span><b class="sp"></b>
            <svg class="ic"><use href="#tosrc"/></svg><span class="tb-t tb-nm">To Source</span><b class="sp"></b>
            <svg class="ic mg4"><use href="#xdoc"/></svg><svg class="ic mg6"><use href="#broom"/></svg>
            <span class="push"></span>
            <div class="search"><svg class="ic"><use href="#lenss"/></svg></div>
          </div>
          <div class="history">
<pre class="his-out">library
library
library
library
library(leaflet)
library(tidyverse)
library(sf)
library(here)
set.seed(69)
randomNumbers <span class="a">←</span> sample.int(100, 138, replace = TRUE)
root1 <span class="a">←</span> here("data", "mbta_rapid_transit", "MBTA_ARC.shp") %&gt;%
st_read("SELECT LINE, ROUTE, GRADE, SHAPE_LEN, geometry, score F…
st_transform(4326) %&gt;% # Weird coordinate system: dont question
mutate(score = randomNumbers)
# Leaflet function from leaflet package which makes a leaflet map
leaflet() %&gt;%</pre>
            <i class="his-bar"><i class="dot"></i></i>
          </div>
        </section>
        <section class="pane pane-view">
          <div class="tabs">
            <div class="tab t-files">Files</div>
            <div class="tab t-plots">Plots</div>
            <div class="tab t-pkg">Packages</div>
            <div class="tab t-help">Help</div>
            <div class="tab tab-on t-view">Viewer</div>
            <svg class="mini"><use href="#mini"/></svg>
          </div>
          <div class="tools tools-r">
            <svg class="ic"><use href="#back"/></svg><svg class="ic mg6"><use href="#fwd"/></svg><b class="sp"></b>
            <svg class="ic"><use href="#zoomp"/></svg><span class="tb-t">Zoom</span><b class="sp"></b>
            <svg class="ic18"><use href="#pic"/></svg><span class="tb-t tb-nm">Export</span><i class="car">▾</i><b class="sp"></b>
            <svg class="ic"><use href="#xdoc"/></svg><b class="sp"></b>
            <svg class="ic"><use href="#broom"/></svg><b class="sp"></b>
            <svg class="ic"><use href="#popout"/></svg>
            <span class="push"></span>
            <svg class="ic18"><use href="#pub"/></svg><span class="tb-t">Publish</span><i class="car">▾</i><b class="sp"></b>
            <svg class="ic"><use href="#reload"/></svg>
          </div>
          <div class="mapwrap">
            <svg class="map" viewBox="1366 485 537 480" xmlns="http://www.w3.org/2000/svg">
              <defs>
                <pattern id="urban" width="4" height="3.500" patternUnits="userSpaceOnUse" patternTransform="rotate(28)">
                  <rect width="4" height="3.500" fill="#ecebe5"/><path d="M0 0H4M0 0V3.500" stroke="#bdbab4" stroke-width=".9"/>
                </pattern>
                <pattern id="urban2" width="3.500" height="4" patternUnits="userSpaceOnUse" patternTransform="rotate(-35)">
                  <rect width="3.500" height="4" fill="#e9e7e1"/><path d="M0 0H3.500M0 0V4" stroke="#b8b5b1" stroke-width=".9"/>
                </pattern>
              </defs>
              <rect x="1366" y="485" width="537" height="480" fill="url(#urban)"/>
              <g transform="translate(1360 480) scale(.35714 .33333)" fill="none" stroke-linejoin="round" stroke-linecap="round">
                <path d="M600 20L1100 20L1300 460L1200 800L1060 1300L600 1450L320 1000L700 640z" fill="url(#urban2)"/>
                <!-- parks -->
                <path d="M230 1120C300 1050 380 1090 385 1150C360 1220 260 1200 220 1180z" fill="#cdebb0"/>
                <path d="M330 400L410 400L395 500L340 480z" fill="#a9c9a0"/>
                <path d="M620 1300L660 1280L760 1360L700 1450L580 1450z" fill="#a8c9a6"/>
                <path d="M480 1330L560 1290L620 1300L570 1440L480 1450z" fill="#c8facc"/>
                <path d="M720 1180L830 1150L860 1220L800 1300L720 1260z" fill="#c8facc"/>
                <path d="M230 90L300 90L400 130L380 150L280 170z" fill="#84c08a"/>
                <path d="M270 220L400 220L400 330L300 340z" fill="#d4efc0"/>
                <path d="M40 950L130 940L160 1030L60 1040z" fill="#a9cda0"/>
                <path d="M480 500L560 490L600 570L520 570z" fill="#c8facc"/>
                <path d="M1420 1130C1460 1070 1520 1040 1520 1100L1450 1160z" fill="#cdebb0"/>
                <path d="M1240 1270L1300 1290L1280 1330z" fill="#cdebb0"/>
                <path d="M1330 920C1400 800 1460 820 1470 830L1410 920z" fill="#e8f8dd"/>
                <path d="M100 750L170 740L180 800L110 810zM20 1100L80 1120L60 1180L20 1170zM400 1230L470 1240L430 1300L380 1290z" fill="#cdebb0"/>
                <!-- water -->
                <path d="M1520 800L1400 815L1360 820L1365 880L1340 920L1200 930L1165 970L1170 1050L1280 1100L1270 1180L1180 1210L1120 1210L1160 1290L1200 1440L1290 1455H1400L1440 1300L1520 1280V1180L1420 1160L1410 1130L1520 1040z" fill="#aad3df"/>
                <path d="M1520 640L1320 640L1240 700L1200 700L1160 690L1100 650L1120 590L1180 570L1260 430L1300 410L1340 350L1400 320L1520 260V360L1440 350L1340 400L1320 640L1520 800z" fill="#aad3df"/>
                <path d="M980 250L1170 290L1200 360L1150 440L1080 460L1010 420L990 340z" fill="#aad3df"/>
                <path d="M620 668C720 640 800 615 880 585L960 560L1000 500L985 470L965 505L950 560L880 570L780 605L650 650z" fill="#aad3df"/>
                <path d="M660 670C760 680 860 650 970 620L990 560L960 560L880 590L780 625z" fill="#aad3df"/>
                <ellipse cx="338" cy="293" rx="58" ry="48" fill="#aad3df"/>
                <ellipse cx="265" cy="865" rx="40" ry="35" fill="#aad3df"/>
                <ellipse cx="572" cy="1075" rx="30" ry="42" fill="#aad3df"/>
                <path d="M800 30L900 60L930 130L860 150L800 70z" fill="#aad3df"/>
                <path d="M1400 80L1500 90L1470 170L1410 160z" fill="#aad3df"/>
                <path d="M230 20L300 20L250 50z" fill="#aad3df"/>
                <ellipse cx="140" cy="985" rx="35" ry="30" fill="#aad3df"/>
                <!-- airport -->
                <path d="M1340 400L1520 340V620L1460 590L1380 560L1370 500z" fill="#e4e2dd"/>
                <path d="M1370 560L1520 360M1410 600L1520 470M1450 440L1520 640M1500 350L1480 580" stroke="#b8acc8" stroke-width="10"/>
                <!-- ferry dashes -->
                <path d="M1170 590L1520 720M1160 610L1520 800M1180 640L1450 800M1220 690L1400 790M1290 750L1520 790M1040 600L1180 560" stroke="#6f8fe8" stroke-width="3" stroke-dasharray="12 7"/>
                <path d="M1290 1180L1300 1440M1480 800L1460 1060L1300 1180" stroke="#6f8fe8" stroke-width="3" stroke-dasharray="12 7"/>
                <path d="M1210 1220L1320 1180L1400 1210L1520 1180" stroke="#a08fa8" stroke-width="4" stroke-dasharray="20 6 3 6"/>
                <path d="M1190 310L1170 470M980 230L1170 280" stroke="#6f8fe8" stroke-width="3" stroke-dasharray="10 7"/>
                <!-- yellow roads -->
                <g stroke="#f6f9b8" stroke-width="8">
                  <path d="M20 50C120 150 200 180 300 230M20 250C100 330 250 380 400 400M20 510C200 560 400 560 700 510M660 650L1000 500M160 1070C250 1180 350 1250 450 1280M570 1150L620 1300M640 880L640 1030M790 1000L640 1290M870 940L890 1080L840 1290M1180 800L1360 830L1350 880L1180 930M880 950L1050 1100M1240 230L1240 360M950 120L1090 100M1520 100L1300 230M400 1060L420 1000L360 900M200 890L350 880M470 30L600 200M680 40L790 350L940 300M650 800L880 960M1000 700L1200 800M1050 860L1200 930M390 1180L530 1150L570 1200M880 1080L700 1000M1390 1440L1450 1270M60 640L200 600L420 640M20 380L140 420L300 380L420 350M230 700L330 790M40 1200L200 1340M1000 1140L1100 1000M1130 1180L1060 1300M860 1220L1000 1300M400 780L560 760L650 800"/>
                </g>
                <!-- orange roads -->
                <g stroke="#fcd6a4" stroke-width="9">
                  <path d="M380 20L560 200L700 300L830 400M380 300L390 360L460 430M20 510L300 580L480 640M760 660C830 620 900 580 960 570M590 1150L620 1260L760 1320M750 1100L860 1220L820 1440M200 1440C250 1350 350 1330 450 1330M1120 900L1140 1180M1070 50L960 290L1000 380M1000 560L960 620M800 610L830 700M600 1000L590 1120L560 1180M1040 70L1000 220"/>
                </g>
                <!-- salmon -->
                <g stroke="#f7a590" stroke-width="9">
                  <path d="M20 1060C150 1030 300 970 400 965C500 950 560 920 640 900M405 150L400 250L375 330L400 380L460 430L490 410L540 470L600 490L600 560M760 30L870 60L1000 70L1080 60L1250 50L1340 30M880 20L820 150L830 380L900 410M1240 80L1250 130M650 670L800 690M20 600L500 610"/>
                </g>
                <!-- pink -->
                <g stroke="#e79aa8" stroke-width="11">
                  <path d="M170 15L400 130M740 30L930 280L990 430L1050 470M1180 290L1060 420M500 620L570 590L640 670M1060 660L1020 840L1100 1000L1180 1180L1100 1200L1200 1420M1000 440a20 20 0 1 0 40 10"/>
                </g>
                <path d="M400 130L440 90L460 30" stroke="#8a7f3a" stroke-width="7"/>
                <!-- rail -->
                <g stroke="#888" stroke-width="4">
                  <path d="M170 145L700 320L980 420M600 20L720 200M150 605L500 620M850 400L800 560L650 650M1060 780L920 1220L910 1440M590 1300L520 1450M1090 80L1220 130L1350 160L1510 50M340 1440L490 1430"/>
                </g>
                <path d="M130 600L130 700L190 800M20 1420L200 1260L320 1340L560 1000" stroke="#b6a3c0" stroke-width="4" stroke-dasharray="18 6"/>
                <!-- peaks -->
                <path fill="#b9713a" d="M515 38l-10 16h20zM602 88l-10 16h20zM742 148l-10 16h20zM900 245l-10 16h20zM792 308l-10 16h20zM1058 315l-10 16h20zM1165 225l-10 16h20zM1300 128l-10 16h20zM1297 75l-10 16h20zM1415 83l-10 16h20zM1495 197l-10 16h20zM145 368l-10 16h20zM378 452l-10 16h20zM358 478l-10 16h20zM658 438l-10 16h20zM1273 503l-10 16h20zM462 770l-10 16h20zM135 810l-10 16h20zM462 850l-10 16h20zM412 923l-10 16h20zM697 928l-10 16h20zM310 1002l-10 16h20zM1148 1150l-10 16h20zM430 1175l-10 16h20zM283 1220l-10 16h20zM97 1223l-10 16h20zM30 1235l-10 16h20zM470 1240l-10 16h20zM548 1268l-10 16h20zM768 1273l-10 16h20zM925 1240l-10 16h20zM1055 1185l-10 16h20zM510 1352l-10 16h20zM460 1335l-10 16h20zM560 1315l-10 16h20zM373 1392l-10 16h20zM1113 1372l-10 16h20zM1013 620l-10 16h20z"/>
                <!-- blue routes -->
                <g stroke="#1f45ee" stroke-width="11" stroke-opacity=".66">
                  <path d="M390 145L430 125L560 130L585 160L575 350L590 420L740 530L880 548L985 560L1040 615L1100 660"/>
                  <path d="M925 15V340L970 410L1040 470L1080 550L1070 600L1040 640L1020 760L950 830L870 935"/>
                  <path d="M915 440L1030 505L1060 500"/>
                  <path d="M1520 255L1440 300L1400 330L1340 350L1310 400L1250 430L1170 570L1080 580"/>
                  <path d="M1215 135L1310 160L1350 230L1372 280L1340 360L1310 400L1350 470L1355 530L1320 650L1260 720L1200 715L1190 680L1140 650L1100 660L1030 660L960 670L900 700L840 715L740 705L540 665L480 685L420 705L400 760L330 790L300 830L190 805"/>
                  <path d="M20 925L205 965L340 860L720 720M340 860L405 858L470 908L600 905L650 800L700 730"/>
                  <path d="M640 890L690 885L840 800L930 720L1020 715M640 900L655 950"/>
                  <path d="M620 1280L700 1080L760 920L860 800L930 720"/>
                  <path d="M1100 660L1120 680L1090 760L1085 960L1125 1020L1130 1090L1100 1270M1100 1270L1200 1410M1100 1270L1040 1285L1010 1320L1020 1420"/>
                  <path d="M1325 475L1380 460L1415 490L1395 510L1405 560M1330 480L1350 490"/>
                  <path d="M1200 715L1290 755"/>
                  <path d="M1250 760L1340 765" stroke-width="18" stroke-opacity=".4"/>
                  <path d="M1040 620L1070 590M1040 640L1030 690M1310 400L1350 470L1355 530M1200 715L1260 725M1100 660L1140 650M1060 720L1010 770"/>
                  <path d="M870 935L950 830L1020 760M620 1280L660 1200"/>
                </g>
              </g>
              <text class="ml" x="1369" y="534">Belmont</text>
              <text class="ml ml-l" x="1590" y="567">Somerville</text>
              <text class="ml ml-l" x="1571" y="617">Cambridge</text>
              <text class="ml ml-l" x="1793" y="551">Chelsea</text>
              <text class="ml" x="1702" y="605">Charlestown</text>
              <text class="ml" x="1730" y="655">North End</text>
              <text class="ml ml-xl" x="1721" y="675">Boston</text>
              <text class="ml" x="1565" y="677">Cambridgeport</text>
              <text class="ml" x="1512" y="693">Allston</text>
              <text class="ml" x="1437" y="714">Brighton</text>
              <text class="ml" x="1659" y="712">Back Bay</text>
              <text class="ml" x="1584" y="742">Fenway-Kenmore</text>
              <text class="ml ml-l" x="1533" y="787">Brookline</text>
              <text class="ml" x="1397" y="791">Chestnut Hill</text>
              <text class="ml" x="1616" y="813">Roxbury</text>
              <text class="ml" x="1736" y="780">South Boston</text>
              <text class="ml" x="1546" y="867">Jamaica Plain</text>
              <text class="ml" x="1669" y="922">Dorchester</text>
              <text class="ml" x="1525" y="946">Roslindale</text>
              <text class="ml ml-m" x="1367" y="632">tertown</text>
              <text class="ml" x="1365" y="684">on Corner</text>
              <text class="ml" x="1366" y="791">ntre</text>
              <text class="ml" x="1366" y="911">k Hill</text>
              <g class="mn">
                <text x="1443" y="499">134</text><text x="1466" y="514">135</text><text x="1627" y="504">21</text><text x="1616" y="488">22</text><text x="1659" y="543">20</text><text x="1668" y="553">21</text><text x="1715" y="628">19</text><text x="1757" y="691">16A</text><text x="1564" y="696">131</text><text x="1671" y="723">133</text><text x="1735" y="717">16</text><text x="1729" y="728">134C-B</text><text x="1772" y="722">13B</text><text x="1723" y="757">15</text><text x="1728" y="790">15B</text><text x="1737" y="803">15A</text><text x="1749" y="817">14</text><text x="1760" y="838">14</text><text x="1767" y="912">13B</text><text x="1772" y="926">13A</text><text x="1796" y="722">13A</text><text x="1831" y="683">137</text>
              </g>
              <text class="plane" x="1825" y="672">✈</text>
              <text class="plane" x="1866" y="664">✈</text>
            </svg>
            <div class="lf-zoom"><span>+</span><span>−</span></div>
            <div class="lf-attr"><a>Leaflet</a> | © <a>OpenStreetMap</a> contributors, <a>CC-BY-SA</a></div>
          </div>
        </section>
      </div>
    </div>
  </section>
</div>
</body>
</html>
```
FILE: styles.css
```css
* { box-sizing: border-box; }
html, body { margin: 0; padding: 0; width: 1920px; height: 1080px; overflow: hidden; background: #333; }
body { font: 12px/1 Roboto, "Liberation Sans", sans-serif; color: #ddd; }
i { font-style: normal; }
.defs { position: absolute; }
.screen { position: relative; width: 1920px; height: 1080px; display: flex; flex-direction: column; overflow: hidden; }
.capline { position: absolute; top: 0; left: 875px; width: 206px; height: 1px; background: #222; z-index: 5; }
.capline-p { display: block; width: 15px; height: 1px; background: #d22d9b; }

.ic { width: 16px; height: 16px; flex: none; }
.ic12 { width: 12px; height: 12px; flex: none; }
.ic15 { width: 15px; height: 15px; flex: none; }
.ic17 { width: 17px; height: 17px; flex: none; }
.ic18 { width: 18px; height: 16px; flex: none; }
.ic20 { width: 20px; height: 16px; flex: none; }
.mg4 { margin-left: 4px; }
.mg6 { margin-left: 6px; }
.dim { opacity: .32; }
.car { width: 14px; text-align: center; font-size: 9px; color: #ccc; flex: none; }

/* QGIS */
.qgis { flex: none; height: 1049px; display: flex; flex-direction: column; background: #353535; }
.q-title { height: 23px; flex: none; background: #fff; display: flex; align-items: center; padding-left: 2px; gap: 4px; position: relative; }
.q-title-t { font-size: 13px; color: #6f6f6f; }
.winbtns { position: absolute; inset: 0 0 0 auto; width: 140px; }
.w-min, .w-max, .w-close { position: absolute; top: 6px; color: #999; }
.w-min { left: 20px; top: 10px; width: 10px; height: 1px; background: #999; }
.w-max { left: 64px; width: 9px; height: 9px; border: 1px solid #999; }
.w-close { left: 111px; top: 5px; font-size: 11px; }
.q-menu { height: 20px; flex: none; display: flex; align-items: center; padding-left: 10px; gap: 13px; color: #cfcfcf; background: #2f2f2f; letter-spacing: -.05px; }
.q-menu span { white-space: nowrap; }
.q-tb { height: 30px; flex: none; display: flex; align-items: center; background: #303030; padding-left: 1px; }
.q-tb2 { height: 33px; padding-bottom: 3px; }
.b { width: 26px; height: 24px; flex: none; display: flex; align-items: center; justify-content: center; }
.b-on { border: 1px solid #e07b1a; }
.q-sep0 { width: 4px; flex: none; }
.q-sep { width: 10px; height: 18px; flex: none; position: relative; }
.q-sep::after { content: ""; position: absolute; left: 4px; top: 2px; width: 1px; height: 14px; background: #555; }
.q-main { flex: 1; display: flex; min-height: 0; }
.q-side { width: 211px; flex: none; display: flex; flex-direction: column; background: #353535; }
.p-title { height: 18px; flex: none; text-align: center; padding-right: 32px; color: #bcbcbc; position: relative; line-height: 16px; }
.p-title2 { height: 28px; line-height: 34px; }
.p-close { position: absolute; right: 12px; top: 3px; width: 10px; height: 10px; }
.p-title2 .p-close { top: 8px; }
.p-tools { height: 30px; flex: none; display: flex; align-items: center; padding: 0 0 2px 2px; }
.p-tools2 { height: 28px; }
.tree { background: #222; border: 1px solid #4a4a4a; margin-right: 8px; position: relative; overflow: hidden; }
.tree-b { height: 210px; flex: none; padding-top: 2px; }
.tree-l { flex: 1; padding-top: 2px; }
.row { height: 18px; display: flex; align-items: center; gap: 6px; color: #d6d6d6; white-space: nowrap; }
.tw { width: 14px; flex: none; font-size: 9px; color: #888; text-align: center; }
.vs { position: absolute; right: 1px; top: 1px; bottom: 1px; width: 10px; background: #2c2c2c; }
.vs-th { position: absolute; left: 0; right: 0; bottom: 0; top: 113px; background: #5a5a5a; }
.lrow { height: 24px; display: flex; align-items: center; color: #ddd; white-space: nowrap; border-bottom: 1px solid #333; }
.lrow strong { font-weight: 700; color: #d8e4d8; }
.lrow-1 { padding-left: 1px; }
.lrow-1 .tw { width: 16px; }
.lrow-1 .eye { margin-left: 7px; }
.lrow-1 .ic { margin: 0 3px 0 5px; }
.lrow-2 { padding-left: 44px; }
.lrow-on { background: #0e6b00; margin-left: 1px; padding-left: 43px; }
.lrow-on strong { text-decoration: underline; color: #dff5d8; }
.lrow-3 { padding-left: 24px; }
.eye { width: 18px; height: 13px; flex: none; margin-right: 5px; }
.lg-line { width: 16px; height: 1px; margin: 0 6px 0 1px; background: #7a4a36; flex: none; }
.lg-dot { width: 5px; height: 5px; margin: 0 12px 0 6px; border-radius: 3px; background: #888; flex: none; }
.lg-box { width: 15px; height: 15px; margin-right: 7px; border: 2px solid #3f9b48; flex: none; }
.lg-chip { width: 20px; height: 20px; margin-left: 11px; border-radius: 3px; background: #555; display: flex; align-items: center; justify-content: center; flex: none; }
.q-canvas { width: 1405px; flex: none; background: #fff; }
.voronoi { display: block; width: 1405px; height: 913px; }
.vl { fill: none; stroke: #4caf4c; stroke-linejoin: round; stroke-linecap: round; }
.vl path { stroke-width: 10.500; }
.vl > path { stroke-width: 3.400; }
.vt { fill: none; stroke: #a0522d; }
.vt path { stroke-width: 2.500; }
.vt > path { stroke-width: .9; }
.vn circle { fill: #7b7b7b; stroke: #2e3a40; stroke-width: 2.400; }
.vn > circle { stroke-width: .8; }
.q-right { flex: 1; margin-left: 6px; background: #222; border: 1px solid #4a4a4a; display: flex; flex-direction: column; justify-content: flex-end; position: relative; overflow: hidden; }
.qr-row { height: 18px; flex: none; display: flex; align-items: center; gap: 6px; padding-left: 8px; color: #d6d6d6; }
.qr-last { margin-bottom: -5px; }
.qr-th { position: absolute; right: 0; top: 45px; width: 11px; bottom: 0; background: #4a4a4a; }
.q-status { height: 30px; flex: none; display: flex; align-items: center; background: #333; color: #aaa; padding-top: 2px; }
.locator { width: 198px; height: 21px; margin-left: 5px; background: #7a7a7a; border: 1px solid #222; display: flex; align-items: center; gap: 5px; padding-left: 4px; color: #444; flex: none; }
.s-lab { flex: none; white-space: nowrap; }
.s-coord { margin-left: 901px; width: 57px; }
.s-in { width: 91px; height: 21px; line-height: 19px; border: 1px solid #222; background: #7e7e7e; color: #222; padding-left: 5px; flex: none; white-space: nowrap; font-size: 11.500px; letter-spacing: -.25px; overflow: hidden; }
.s-wkt { width: 15px; height: 18px; margin: 0 12px 0 6px; flex: none; }
.s-scale { width: 29px; }
.s-combo { height: 21px; line-height: 19px; border: 1px solid #222; background: #444; color: #9a9a9a; padding-left: 6px; flex: none; display: flex; align-items: center; justify-content: space-between; padding-right: 6px; }
.s-combo-scale { width: 97px; }
.s-combo-mag { width: 84px; margin-left: 3px; }
.s-combo-rot { width: 85px; margin-left: 3px; }
.s-lock { width: 13px; height: 16px; margin: 0 8px 0 12px; flex: none; }
.s-mag { width: 48px; }
.s-rot { width: 48px; margin-left: 6px; }
.s-upd { width: 6px; height: 12px; }
.s-render { width: 16px; height: 17px; margin: 0 6px; background: #0e6b00; flex: none; }
.s-rend { width: 46px; }
.s-globe { width: 14px; height: 14px; margin-right: 3px; flex: none; }
.s-epsg { width: 70px; }
.s-bub { width: 16px; height: 16px; margin-left: 6px; flex: none; }

/* taskbar */
.taskbar { flex: 1; display: flex; align-items: center; background: linear-gradient(90deg, #571c43 0, #571c43 60%, #2b0a26 70%, #2b0a26 72%, #561b42 80%, #581c44 100%); position: relative; }
.tk { width: 36px; height: 31px; flex: none; display: flex; align-items: center; justify-content: center; position: relative; }
.tk-app { width: 35px; height: 31px; }
.tk-app::after { content: ""; position: absolute; left: 4px; right: 4px; bottom: 0; height: 2px; background: #e8a0e4; }
.tk-ff { margin-left: 2px; }
.tk-r { margin-left: 3px; background: #7a1a6c; }
.tk-r::after { left: 0; right: 0; }
.tk-q { margin-left: 3px; }
.ic18 { height: 18px; }
.tray { margin-left: auto; display: flex; align-items: center; gap: 8px; padding-right: 24px; color: #eee; }
.clock { font-size: 12px; margin: 0 10px 0 4px; color: #f0f0f0; white-space: nowrap; }
.tray-n { width: 16px; height: 18px; }

/* RStudio */
.rs { position: absolute; left: 712px; top: 43px; width: 1200px; height: 930px; background: #2f4860; display: flex; flex-direction: column; box-shadow: 0 0 12px rgba(0,0,0,.45); color: #e8eaec; }
.rs-title { height: 30px; flex: none; background: #fff; color: #222; display: flex; align-items: center; gap: 6px; padding-left: 8px; font-size: 13px; position: relative; }
.rs-win i { position: absolute; }
.r-min { left: 1081px; top: 14px; width: 10px; height: 1px; background: #111; }
.r-max { left: 1126px; top: 9px; width: 10px; height: 10px; border: 1px solid #111; }
.r-close { left: 1171px; top: 8px; font-size: 12px; color: #111; }
.rs-menu { height: 21px; flex: none; background: #4c5a66; display: flex; align-items: center; padding: 1px 0 0 8px; gap: 16px; border-bottom: 1px solid #20303d; letter-spacing: -.12px; }
.rs-tb { height: 23px; flex: none; background: #4c5a66; display: flex; align-items: center; padding: 4px 4px 0 7px; border-bottom: 1px solid #20303d; gap: 2px; }
.sp { width: 1px; height: 15px; margin: 0 3px 0 2px; background: #1f2d38; flex: none; }
.sp-g { margin-left: 10px; }
.goto { width: 146px; height: 17px; margin-left: 4px; border: 1px solid #76848f; border-radius: 3px; background: #5d6a75; display: flex; align-items: center; gap: 8px; padding-left: 7px; color: #bcc5cc; flex: none; font-size: 11.500px; letter-spacing: -.2px; }
.tb-t { white-space: nowrap; margin: 0 3px; flex: none; font-size: 11.500px; letter-spacing: -.2px; }
.tb-nm { margin-right: 0; }
.push { flex: 1; }
.rs-body { flex: 1; min-height: 0; display: flex; gap: 8px; padding: 9px 8px 8px 9px; }
.col { display: flex; flex-direction: column; gap: 9px; min-width: 0; }
.col-l { width: 636px; flex: none; }
.col-r { width: 539px; flex: none; }
.pane { display: flex; flex-direction: column; border: 1px solid #1d2d3a; min-height: 0; overflow: hidden; }
.pane-src { height: 481px; flex: none; }
.pane-con { flex: 1; }
.pane-hist { height: 305px; flex: none; }
.pane-view { flex: 1; }
.tabs { height: 22px; flex: none; background: #2d3d4b; display: flex; align-items: stretch; position: relative; border-bottom: 1px solid #1d2d3a; }
.tab { display: flex; align-items: center; gap: 4px; padding-left: 8px; border-right: 1px solid #1d2d3a; white-space: nowrap; flex: none; color: #e8eaec; letter-spacing: -.25px; }
.tab-on { background: #4c5a66; height: 22px; }
.x { font-size: 9px; color: #73818c; margin-left: 2px; }
.t-map { width: 76px; }
.t-root { width: 77px; }
.t-readme { width: 111px; }
.t-git { width: 96px; }
.t-vor { width: 96px; }
.t-con { width: 57px; padding-left: 7px; }
.t-term { width: 73px; padding-left: 9px; }
.t-jobs { width: 53px; padding-left: 9px; }
.t-env { width: 81px; padding-left: 9px; }
.t-his { width: 54px; padding-left: 9px; }
.t-cnn { width: 80px; padding-left: 9px; }
.t-gt { width: 33px; padding-left: 9px; }
.t-tut { width: 56px; padding-left: 9px; }
.t-files { width: 41px; padding-left: 9px; }
.t-plots { width: 43px; padding-left: 9px; }
.t-pkg { width: 64px; padding-left: 9px; }
.t-help { width: 41px; padding-left: 9px; }
.t-view { width: 52px; padding-left: 9px; }
.mini { width: 30px; height: 14px; position: absolute; right: 9px; top: 4px; }
.tools { height: 22px; flex: none; background: #4c5a66; display: flex; align-items: center; padding: 0 7px; gap: 2px; border-bottom: 1px solid #1d2d3a; }
.tools .sp { margin: 0 3px 0 5px; }
.chk { width: 11px; height: 13px; border-radius: 2px; background: #eee; margin: 0 1px 0 9px; flex: none; }
.car-r { margin-left: -4px; }
.editor { flex: 1; position: relative; background: #2b2b2b; display: flex; min-height: 0; overflow: hidden; }
.gutter { width: 49px; flex: none; background: #232323; font: 13.300px/15px "DejaVu Sans Mono", monospace; color: #c8c8c8; text-align: right; padding: 0 13px 0 0; }
.gutter div { height: 15px; position: relative; }
.fd::after, .fu::after { position: absolute; right: -10px; top: 1px; font-size: 7px; color: #999; }
.fd::after { content: "▼"; }
.fu::after { content: "▲"; }
pre { margin: 0; font: 13.300px/15px "DejaVu Sans Mono", monospace; color: #c8c8c8; white-space: pre; }
.code { padding-left: 4px; flex: 1; overflow: hidden; }
.c { color: #7d7d7d; }
.k { color: #c18ac1; }
.p { color: #52b6b6; }
.o { color: #e2885a; }
.s { color: #8cc08c; }
.a { font-size: 18px; line-height: 1px; margin-left: 1px; letter-spacing: 4.200px; position: relative; top: 2px; color: #52b6b6; }
.vbar { position: absolute; right: 0; top: 0; bottom: 17px; width: 17px; background: #2b3239; }
.vbar-th { position: absolute; left: 3px; top: 2px; width: 11px; height: 260px; border-radius: 5px; background: #4c5a66; }
.hbar { position: absolute; left: 49px; right: 0; bottom: 0; height: 17px; background: #2b2b2b; }
.hbar-th { position: absolute; left: 3px; top: 3px; width: 314px; height: 11px; border-radius: 5px; background: #4c5a66; }
.ed-status { height: 17px; flex: none; background: #4c5a66; border-top: 1px solid #1d2d3a; display: flex; align-items: center; padding-top: 1px; }
.es-pos { width: 56px; flex: none; text-align: center; border-right: 1px solid #1d2d3a; height: 100%; line-height: 15px; letter-spacing: -.2px; }
.es-fn { display: flex; align-items: center; gap: 5px; padding-left: 5px; flex: 1; letter-spacing: -.3px; }
.fx { width: 10px; height: 12px; }
.upd { width: 6px; height: 11px; margin-left: 3px; }
.es-type { width: 61px; flex: none; border-left: 1px solid #1d2d3a; height: 100%; display: flex; align-items: center; padding-left: 5px; letter-spacing: -.2px; white-space: nowrap; }
.tools-con { padding: 2px 7px 0 6px; }
.con-v { margin: 0 0 0 5px; }
.con-d { margin: 0 3px 0 4px; color: #aab; }
.console { flex: 1; position: relative; background: #2b2b2b; min-height: 0; display: flex; flex-direction: column; justify-content: flex-end; overflow: hidden; }
.con-out { padding: 0 0 0 6px; flex: none; margin-bottom: -1px; }
.cmd { color: #c18ac1; }
.cmd .a { color: #c18ac1; }
.con-bar { position: absolute; right: 0; top: 0; bottom: 0; width: 17px; background: #2b3239; }
.dot { position: absolute; left: 3px; bottom: 6px; width: 11px; height: 11px; border-radius: 6px; background: #4c5a66; }
.history { flex: 1; position: relative; background: #2b2b2b; min-height: 0; overflow: hidden; }
.his-out { line-height: 17px; padding: 1px 17px 0 3px; height: 100%; overflow: hidden; }
.his-out .a { color: inherit; }
.con-out .a { color: inherit; }
.his-bar { position: absolute; right: 0; top: 0; bottom: 0; width: 17px; background: #2b3239; }
.his-bar .dot { bottom: 6px; }
.tools-r { padding: 1px 3px 0 8px; }
.search { width: 121px; height: 16px; margin-right: 5px; border: 1px solid #76848f; border-radius: 3px; background: #5d6a75; display: flex; align-items: center; padding-left: 5px; flex: none; }
.search .ic { width: 12px; height: 12px; }
.mapwrap { flex: 1; position: relative; background: #eee; min-height: 0; overflow: hidden; }
.map { display: block; width: 537px; height: 480px; }
.ml { font: 12px "Noto Sans", sans-serif; fill: #333; stroke: rgba(255,255,255,.7); stroke-width: 2px; paint-order: stroke; }
.ml-l { font-size: 14.500px; }
.ml-xl { font-size: 15.500px; }
.ml-m { font-size: 13px; }
.mn text { font: italic 10.500px "Noto Sans", sans-serif; fill: #a80a24; stroke: rgba(255,255,255,.6); stroke-width: 1.500px; paint-order: stroke; }
.plane { font: 15px "DejaVu Sans", sans-serif; fill: #8461c4; }
.lf-zoom { position: absolute; left: 12px; top: 12px; width: 30px; display: flex; flex-direction: column; background: #fff; border-radius: 3px; box-shadow: 0 1px 4px rgba(0,0,0,.5); }
.lf-zoom span { height: 30px; display: flex; align-items: center; justify-content: center; font: 700 22px "Liberation Sans", sans-serif; color: #111; }
.lf-zoom span + span { border-top: 1px solid #ccc; }
.lf-attr { position: absolute; right: 0; bottom: 0; height: 16px; padding: 0 5px; background: rgba(255,255,255,.72); font: 11px/16px "Liberation Sans", sans-serif; color: #333; white-space: nowrap; }
.lf-attr a { color: #0078a8; }
```
